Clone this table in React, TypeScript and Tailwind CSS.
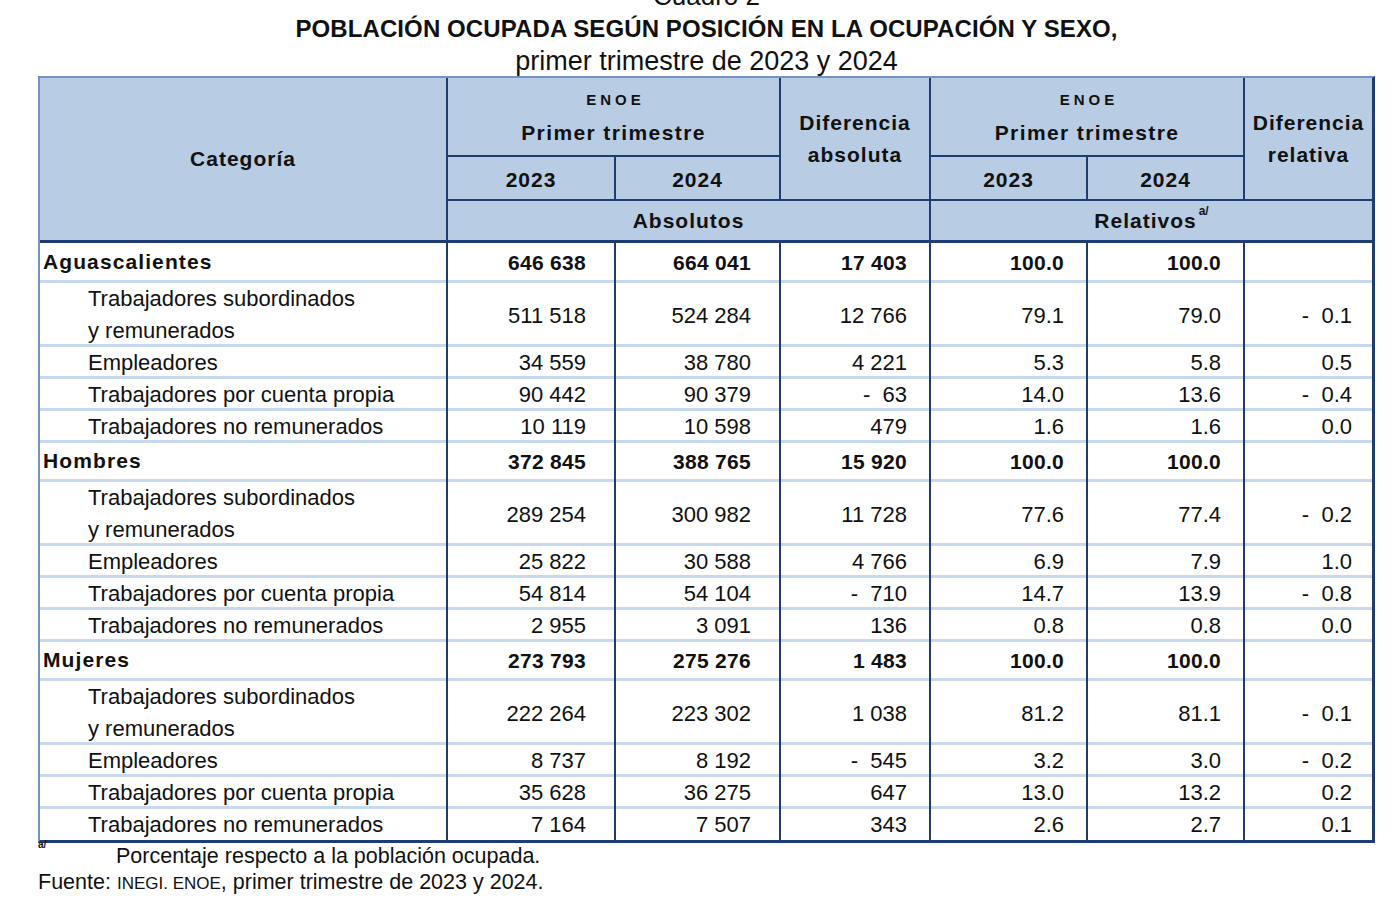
import React from 'react';

type Group = {
  name: string;
  total: string[];
  rows: { label: string[]; values: string[] }[];
};

const groups: Group[] = [
  {
    name: 'Aguascalientes',
    total: ['646 638', '664 041', '17 403', '100.0', '100.0', ''],
    rows: [
      { label: ['Trabajadores subordinados', 'y remunerados'], values: ['511 518', '524 284', '12 766', '79.1', '79.0', '-  0.1'] },
      { label: ['Empleadores'], values: ['34 559', '38 780', '4 221', '5.3', '5.8', '0.5'] },
      { label: ['Trabajadores por cuenta propia'], values: ['90 442', '90 379', '-  63', '14.0', '13.6', '-  0.4'] },
      { label: ['Trabajadores no remunerados'], values: ['10 119', '10 598', '479', '1.6', '1.6', '0.0'] },
    ],
  },
  {
    name: 'Hombres',
    total: ['372 845', '388 765', '15 920', '100.0', '100.0', ''],
    rows: [
      { label: ['Trabajadores subordinados', 'y remunerados'], values: ['289 254', '300 982', '11 728', '77.6', '77.4', '-  0.2'] },
      { label: ['Empleadores'], values: ['25 822', '30 588', '4 766', '6.9', '7.9', '1.0'] },
      { label: ['Trabajadores por cuenta propia'], values: ['54 814', '54 104', '-  710', '14.7', '13.9', '-  0.8'] },
      { label: ['Trabajadores no remunerados'], values: ['2 955', '3 091', '136', '0.8', '0.8', '0.0'] },
    ],
  },
  {
    name: 'Mujeres',
    total: ['273 793', '275 276', '1 483', '100.0', '100.0', ''],
    rows: [
      { label: ['Trabajadores subordinados', 'y remunerados'], values: ['222 264', '223 302', '1 038', '81.2', '81.1', '-  0.1'] },
      { label: ['Empleadores'], values: ['8 737', '8 192', '-  545', '3.2', '3.0', '-  0.2'] },
      { label: ['Trabajadores por cuenta propia'], values: ['35 628', '36 275', '647', '13.0', '13.2', '0.2'] },
      { label: ['Trabajadores no remunerados'], values: ['7 164', '7 507', '343', '2.6', '2.7', '0.1'] },
    ],
  },
];

const cols = 'grid grid-cols-[408px_168px_165px_150px_157px_157px_127px]';
const line = 'border-[#1f3d73]';
const sep = 'shadow-[inset_0_-3px_0_#c6d9f1]';
const head = 'flex items-center justify-center bg-[#b8cce4] font-bold text-[21px] tracking-[1px]';

const padRight = ['pr-[28px]', 'pr-[28px]', 'pr-[22px]', 'pr-[22px]', 'pr-[22px]', 'pr-[20px]'];

function NumCells({ values, bold, last }: { values: string[]; bold?: boolean; last?: boolean }) {
  return (
    <>
      {values.map((v, i) => (
        <div
          key={i}
          className={`flex items-center justify-end whitespace-pre ${padRight[i]} ${i < 5 ? `border-r-2 ${line}` : ''} ${last ? '' : sep} ${bold ? 'font-bold text-[21px] tracking-[0.3px]' : 'text-[22px]'}`}
        >
          {v}
        </div>
      ))}
    </>
  );
}

export default function App() {
  return (
    <div className="min-h-screen w-[1396px] bg-white text-[#111] font-['Liberation_Sans',Arial,sans-serif]">
      <div className="ml-[38px] w-[1337px]">
        <div className="-mt-[19px] h-[30px] text-center text-[26px] leading-[30px]">Cuadro 2</div>
        <div className="mt-[4px] h-[28px] text-center text-[24px] font-bold leading-[28px] tracking-[0.1px]">
          POBLACIÓN OCUPADA SEGÚN POSICIÓN EN LA OCUPACIÓN Y SEXO,
        </div>
        <div className="mt-[3px] h-[30px] text-center text-[27px] leading-[30px]">primer trimestre de 2023 y 2024</div>

        <div className="border-t-2 border-l-2 border-r-[3px] border-b-[3px] border-t-[#7592c4] border-l-[#7592c4] border-r-[#1f3d73] border-b-[#1f3d73]">
          {/* encabezado */}
          <div className={`${cols} grid-rows-[79px_44px_42px]`}>
            <div className={`${head} row-span-3 border-r-2 border-b-[3px] ${line}`}>Categoría</div>
            <div className={`col-span-2 flex flex-col items-center bg-[#b8cce4] font-bold border-r-2 border-b-2 ${line}`}>
              <div className="mt-[12px] text-[15px] leading-[20px] tracking-[4px] pl-[4px]">ENOE</div>
              <div className="mt-[10px] text-[21px] leading-[26px] tracking-[1.4px]">Primer trimestre</div>
            </div>
            <div className={`${head} row-span-2 flex-col border-r-2 border-b-2 ${line} leading-[32px]`}>
              <span>Diferencia</span>
              <span>absoluta</span>
            </div>
            <div className={`col-span-2 flex flex-col items-center bg-[#b8cce4] font-bold border-r-2 border-b-2 ${line}`}>
              <div className="mt-[12px] text-[15px] leading-[20px] tracking-[4px] pl-[4px]">ENOE</div>
              <div className="mt-[10px] text-[21px] leading-[26px] tracking-[1.4px]">Primer trimestre</div>
            </div>
            <div className={`${head} row-span-2 flex-col border-b-2 ${line} leading-[32px]`}>
              <span>Diferencia</span>
              <span>relativa</span>
            </div>
            <div className={`${head} pt-[3px] border-r-2 border-b-2 ${line}`}>2023</div>
            <div className={`${head} pt-[3px] border-r-2 border-b-2 ${line}`}>2024</div>
            <div className={`${head} pt-[3px] border-r-2 border-b-2 ${line}`}>2023</div>
            <div className={`${head} pt-[3px] border-r-2 border-b-2 ${line}`}>2024</div>
            <div className={`${head} col-span-3 border-r-2 border-b-[3px] ${line}`}>Absolutos</div>
            <div className={`${head} col-span-3 border-b-[3px] ${line}`}>
              Relativos<sup className="ml-[2px] -mt-[8px] text-[12px] tracking-normal">a/</sup>
            </div>
          </div>

          {/* cuerpo */}
          {groups.map((g, gi) => (
            <React.Fragment key={g.name}>
              <div className={`${cols} h-[40px]`}>
                <div className={`flex items-center pl-[3px] pb-[2px] font-bold text-[21px] tracking-[1.1px] border-r-2 ${line} ${sep}`}>
                  {g.name}
                </div>
                <NumCells values={g.total} bold />
              </div>
              {g.rows.map((r, ri) => {
                const last = gi === groups.length - 1 && ri === g.rows.length - 1;
                return (
                  <div key={ri} className={`${cols} ${r.label.length > 1 ? 'h-[63px]' : 'h-[32px]'}`}>
                    <div className={`flex flex-col justify-center pl-[48px] text-[22px] leading-[32px] border-r-2 ${line} ${last ? '' : sep}`}>
                      {r.label.map((l) => (
                        <span key={l}>{l}</span>
                      ))}
                    </div>
                    <NumCells values={r.values} last={last} />
                  </div>
                );
              })}
            </React.Fragment>
          ))}
        </div>

        <div className="flex h-[26px] items-center text-[21.5px] leading-[26px]">
          <sup className="self-start mt-[2px] w-[78px] text-[10px] font-bold leading-none">a/</sup>
          <span>Porcentaje respecto a la población ocupada.</span>
        </div>
        <div className="flex h-[26px] items-baseline text-[21.5px] leading-[26px]">
          <span>Fuente:</span>
          <span className="ml-[6px] text-[17px]">INEGI. ENOE</span>
          <span>, primer trimestre de 2023 y 2024.</span>
        </div>
      </div>
    </div>
  );
}
